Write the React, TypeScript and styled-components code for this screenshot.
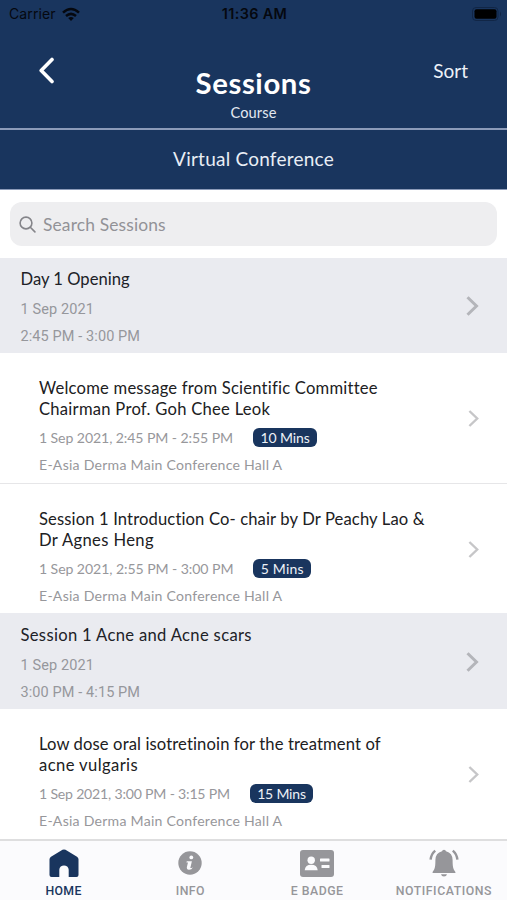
import React from "react";
import styled, { createGlobalStyle } from "styled-components";

const navy = "#19355e";

const GlobalStyle = createGlobalStyle`
  * { box-sizing: border-box; }
  body {
    margin: 0;
    background: #fff;
    font-family: Lato, "Open Sans", sans-serif;
    font-variant-ligatures: none;
    overflow: hidden;
  }
`;

const Screen = styled.div`
  width: 507px;
  height: 900px;
  display: flex;
  flex-direction: column;
  overflow: hidden;
  background: #fff;
`;

const Text = styled.span<{ $track?: number }>`
  white-space: nowrap;
  letter-spacing: ${(p) => p.$track ?? 0}px;
`;

const StatusBar = styled.div`
  height: 28px;
  flex: none;
  display: grid;
  grid-template-columns: 1fr auto 1fr;
  align-items: center;
  padding: 0 7px 0 9px;
  background: ${navy};
  color: #05080f;
  font: 400 14px/28px Inter, sans-serif;
`;

const Carrier = styled.div`
  display: flex;
  align-items: center;
  gap: 6px;
`;

const Clock = styled(Text)`
  font-size: 14.4px;
  font-weight: 600;
`;

const BatterySlot = styled.div`
  display: flex;
  justify-content: flex-end;
  margin-right: -2px;
`;

const Header = styled.header`
  height: 102px;
  flex: none;
  display: grid;
  grid-template-columns: 1fr auto 1fr;
  padding: 0 39px;
  background: ${navy};
  border-bottom: 2px solid #8c9bb9;
  color: #fff;
`;

const BackButton = styled.button`
  justify-self: start;
  align-self: start;
  margin: 28px 0 0 -2px;
  padding: 0;
  border: 0;
  background: none;
  color: inherit;
  display: flex;
`;

const Heading = styled.div`
  display: flex;
  flex-direction: column;
  align-items: center;
  padding-top: 37px;
`;

const Title = styled(Text)`
  font-size: 29.3px;
  font-weight: 700;
  line-height: 36px;
`;

const Subtitle = styled(Text)`
  font-size: 14.6px;
  line-height: 23px;
  color: #e3e8f0;
`;

const SortButton = styled.button`
  justify-self: end;
  align-self: start;
  margin-top: 31px;
  padding: 0;
  border: 0;
  background: none;
  font: 400 19px/24px Lato, sans-serif;
  color: #eef2f8;
`;

const Banner = styled.div`
  height: 60px;
  flex: none;
  display: flex;
  align-items: center;
  justify-content: center;
  padding-bottom: 2px;
  background: ${navy};
  border-bottom: 1px solid #8c9bb9;
  color: #e9eef5;
  font-size: 19px;
`;

const SearchArea = styled.div`
  height: 68px;
  flex: none;
  padding: 12px 10px;
`;

const SearchBox = styled.div`
  height: 44px;
  display: flex;
  align-items: center;
  gap: 7px;
  padding: 0 9px;
  border-radius: 12px;
  background: #eeeef0;
  color: #929297;
  font-size: 17.4px;
`;

const List = styled.main`
  flex: 1;
  min-height: 0;
  overflow: hidden;
`;

const Section = styled.section<{ $first?: boolean }>`
  height: ${(p) => (p.$first ? 95 : 96)}px;
  display: flex;
  align-items: flex-start;
  justify-content: space-between;
  padding: ${(p) => (p.$first ? 7 : 8)}px 27px 0 20.5px;
  background: #eaebf0;
  color: #b4b5ba;
`;

const SectionBody = styled.div`
  display: flex;
  flex-direction: column;
`;

const SectionTitle = styled(Text)`
  font-size: 16.6px;
  line-height: 28px;
  margin-bottom: 2.5px;
  color: #202127;
`;

const SectionDetail = styled(Text)`
  font: 400 14.5px/27px Roboto, sans-serif;
  color: #96979c;
`;

const Session = styled.article<{ $last?: boolean }>`
  height: ${(p) => (p.$last ? 129 : 131)}px;
  display: flex;
  align-items: flex-start;
  justify-content: space-between;
  padding: 25px 27px 0 39px;
  border-bottom: ${(p) => (p.$last ? "0" : "1px solid #e6e6e8")};
  color: #c6c6c8;
`;

const SessionBody = styled.div`
  display: flex;
  flex-direction: column;
`;

const Disclosure = styled.div<{ $top: number }>`
  display: flex;
  padding-top: ${(p) => p.$top}px;
`;

const SessionTitle = styled(Text)`
  font-size: 16.6px;
  line-height: 20.6px;
  color: #202022;
`;

const MetaRow = styled.div`
  display: flex;
  align-items: center;
  height: 27px;
  margin-top: 5.3px;
  gap: 20px;
`;

const Meta = styled(Text)`
  font-size: 14.1px;
  line-height: 27px;
  color: #97979b;
`;

const Duration = styled(Text)`
  height: 19px;
  padding: 0 7.3px;
  border-radius: 6px;
  background: ${navy};
  color: #edf1f7;
  font-size: 14px;
  line-height: 19px;
`;

const TabBar = styled.nav`
  height: 61px;
  flex: none;
  display: grid;
  grid-template-columns: repeat(4, 1fr);
  border-top: 2px solid #dededf;
  background: #fbfbfd;
`;

const Tab = styled.div<{ $active?: boolean }>`
  display: flex;
  flex-direction: column;
  align-items: center;
  padding-left: 0.5px;
  color: ${(p) => (p.$active ? navy : "#96969a")};
  font: 500 12.3px/16px Roboto, sans-serif;
`;

const TabIcon = styled.div`
  height: 42px;
  display: flex;
  align-items: center;
  padding-top: 2px;
`;

const Wifi = () => (
  <svg width="18" height="15" viewBox="0 0 18 15" fill="none" stroke="#05080f" strokeWidth="2.5">
    <path d="M1 5.6Q9-1.6 17 5.6M4 9Q9 4.7 14 9" />
    <path d="M9 14 6.2 11.1Q9 8.9 11.8 11.1Z" fill="#05080f" stroke="none" />
  </svg>
);

const Battery = () => (
  <svg width="30" height="14" viewBox="0 0 30 14">
    <rect x="0.5" y="0.5" width="25.5" height="13" rx="3.5" fill="none" stroke="#112646" />
    <rect x="2.5" y="2.3" width="22" height="9.4" rx="2" fill="#000" />
    <path d="M28 4.5Q30 7 28 9.5Z" fill="#112646" />
  </svg>
);

const Back = () => (
  <svg width="18" height="28" viewBox="0 0 18 28" fill="none" stroke="currentColor" strokeWidth="3.6" strokeLinecap="round" strokeLinejoin="round">
    <path d="M15 3.5 4.2 14.6 15 25.5" />
  </svg>
);

const Chevron = ({ large }: { large?: boolean }) => (
  <svg width={large ? 15 : 13} height={large ? 20 : 17} viewBox={large ? "0 0 15 20" : "0 0 13 17"} fill="none" stroke="currentColor" strokeWidth={large ? 3 : 2.4}>
    <path d={large ? "M2.5 1.2 11.5 10 2.5 18.8" : "M2.4 1 10.2 8.5 2.4 16"} />
  </svg>
);

const SearchIcon = () => (
  <svg width="17" height="17" viewBox="0 0 17 17" fill="none" stroke="#85858a" strokeWidth="1.6" strokeLinecap="round">
    <circle cx="7" cy="7" r="5.9" />
    <path d="m11.3 11.3 4.6 4.6" />
  </svg>
);

const HomeIcon = () => (
  <svg width="30" height="29" viewBox="0 0 30 29" fill="currentColor">
    <path d="M13.5.8Q15 0 16.5.8L28 7.8Q29.5 8.8 29.5 10.3V26Q29.5 28 27.5 28H19.7V20.7C19.7 15 10.3 15 10.3 20.7V28H2.5Q.5 28 .5 26V10.3Q.5 8.8 2 7.8Z" />
  </svg>
);

const InfoIcon = () => (
  <svg width="24" height="24" viewBox="0 0 24 24">
    <circle cx="12" cy="12" r="11.7" fill="currentColor" />
    <circle cx="13.3" cy="6.4" r="1.9" fill="#fbfbfd" />
    <path d="M8.8 10.2H13.9L12.3 17H13.6L15 16.3Q13.5 19 10.8 18.8Q8.2 18.5 9 15.5L10 11.6H8.4Z" fill="#fbfbfd" />
  </svg>
);

const BadgeIcon = () => (
  <svg width="36" height="29" viewBox="0 0 36 29">
    <rect x="1" y="1" width="34" height="27" rx="3" fill="currentColor" />
    <g fill="#fbfbfd">
      <circle cx="12.2" cy="11.3" r="3.7" />
      <path d="M5.7 21.2Q6.3 15.8 12.2 15.8T18.7 21.2Z" />
      <rect x="21" y="9.5" width="9.5" height="3" rx=".6" />
      <rect x="22.5" y="16" width="8" height="3" rx=".6" />
    </g>
  </svg>
);

const BellIcon = () => (
  <svg width="30" height="28" viewBox="0 0 30 28" fill="currentColor">
    <path d="M15 .7Q16.7.7 17 2.2Q23.6 4 23.6 11C23.6 17 24 20 26.4 23V24H3.6V23C6 20 6.4 17 6.4 11Q6.4 4 13 2.2Q13.3.7 15 .7ZM12 25.2H18Q17.5 27.5 15 27.5T12 25.2Z" />
    <path d="M6.2 1.6Q2.2 5 1.6 10.6M23.8 1.6Q27.8 5 28.4 10.6" fill="none" stroke="currentColor" strokeWidth="2.4" />
  </svg>
);

type Line = [string, number];

const SectionRow = ({ title, time, first }: { title: Line; time: string; first?: boolean }) => (
  <Section $first={first}>
    <SectionBody>
      <SectionTitle $track={title[1]}>{title[0]}</SectionTitle>
      <SectionDetail $track={0.1}>1 Sep 2021</SectionDetail>
      <SectionDetail $track={0.1}>{time}</SectionDetail>
    </SectionBody>
    <Disclosure $top={31}><Chevron large /></Disclosure>
  </Section>
);

type SessionProps = { lines: Line[]; time: Line; mins: Line; last?: boolean };

const SessionRow = ({ lines, time, mins, last }: SessionProps) => (
  <Session $last={last}>
    <SessionBody>
      {lines.map(([text, track]) => (
        <SessionTitle key={text} $track={track}>{text}</SessionTitle>
      ))}
      <MetaRow>
        <Meta $track={time[1]}>{time[0]}</Meta>
        <Duration $track={mins[1]}>{mins[0]}</Duration>
      </MetaRow>
      <Meta $track={0.24}>E-Asia Derma Main Conference Hall A</Meta>
    </SessionBody>
    <Disclosure $top={32}><Chevron /></Disclosure>
  </Session>
);

export default function App() {
  return (
    <>
      <GlobalStyle />
      <Screen>
        <StatusBar>
          <Carrier><Text $track={0.1}>Carrier</Text><Wifi /></Carrier>
          <Clock $track={0.35}>11:36 AM</Clock>
          <BatterySlot><Battery /></BatterySlot>
        </StatusBar>
        <Header>
          <BackButton aria-label="Back"><Back /></BackButton>
          <Heading>
            <Title $track={0.6}>Sessions</Title>
            <Subtitle $track={0.1}>Course</Subtitle>
          </Heading>
          <SortButton>Sort</SortButton>
        </Header>
        <Banner><Text $track={0.23}>Virtual Conference</Text></Banner>
        <SearchArea>
          <SearchBox><SearchIcon /><Text $track={0.15}>Search Sessions</Text></SearchBox>
        </SearchArea>
        <List>
          <SectionRow title={["Day 1 Opening", 0]} time="2:45 PM - 3:00 PM" first />
          <SessionRow
            lines={[["Welcome message from Scientific Committee", 0.22], ["Chairman Prof. Goh Chee Leok", 0.26]]}
            time={["1 Sep 2021, 2:45 PM - 2:55 PM", -0.09]}
            mins={["10 Mins", -0.1]}
          />
          <SessionRow
            lines={[["Session 1 Introduction Co- chair by Dr Peachy Lao &", 0.13], ["Dr Agnes Heng", 0.36]]}
            time={["1 Sep 2021, 2:55 PM - 3:00 PM", -0.08]}
            mins={["5 Mins", 0.2]}
            last
          />
          <SectionRow title={["Session 1 Acne and Acne scars", 0.33]} time="3:00 PM - 4:15 PM" />
          <SessionRow
            lines={[["Low dose oral isotretinoin for the treatment of", 0.12], ["acne vulgaris", 0.4]]}
            time={["1 Sep 2021, 3:00 PM - 3:15 PM", -0.2]}
            mins={["15 Mins", -0.2]}
          />
        </List>
        <TabBar>
          <Tab $active><TabIcon><HomeIcon /></TabIcon><Text $track={0.4}>HOME</Text></Tab>
          <Tab><TabIcon><InfoIcon /></TabIcon><Text $track={0.4}>INFO</Text></Tab>
          <Tab><TabIcon><BadgeIcon /></TabIcon><Text $track={0.5}>E BADGE</Text></Tab>
          <Tab><TabIcon><BellIcon /></TabIcon><Text $track={0.55}>NOTIFICATIONS</Text></Tab>
        </TabBar>
      </Screen>
    </>
  );
}
